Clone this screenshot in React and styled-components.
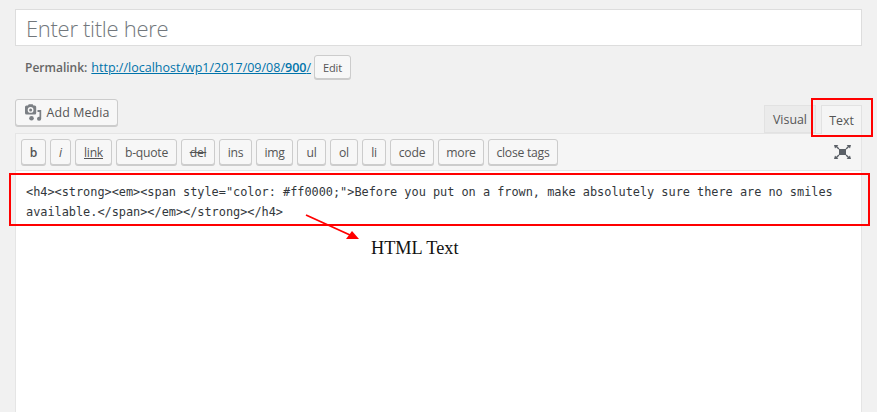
import React from "react";
import styled, { createGlobalStyle } from "styled-components";

const Global = createGlobalStyle`
  html, body { margin: 0; padding: 0; background: #f1f1f1; overflow: hidden; }
  #root { height: 412px; }
  * { box-sizing: border-box; }
`;

const Page = styled.div`
  position: relative;
  width: 877px;
  height: 412px;
  padding: 9px 15px 0;
  overflow: hidden;
  background: #f1f1f1;
  color: #555;
  font-family: "Open Sans", "Liberation Sans", sans-serif;
  font-size: 13px;
`;

const TitleBox = styled.div`
  height: 37px;
  display: flex;
  align-items: center;
  padding: 0 10px;
  background: #fff;
  border: 1px solid #ddd;
  color: #72777c;
  font-size: 22px;
  font-weight: 300;
  letter-spacing: -0.3px;
`;

const PermalinkRow = styled.div`
  height: 26px;
  margin-top: 8px;
  padding-left: 10px;
  display: flex;
  align-items: center;
  gap: 3px;
  font-size: 12.5px;
  color: #666;
`;

const Label = styled.strong`
  font-weight: 600;
  font-size: 12px;
  margin-right: 1px;
`;

const Link = styled.a`
  color: #0073aa;
  text-decoration: underline;
  b { font-weight: 600; }
`;

const Button = styled.span`
  display: inline-flex;
  align-items: center;
  justify-content: center;
  background: #f7f7f7;
  border: 1px solid #ccc;
  border-radius: 3px;
  box-shadow: 0 1px 0 #ccc;
  color: #555;
  white-space: nowrap;
`;

const EditButton = styled(Button)`
  width: 37px;
  height: 24px;
  font-size: 11px;
  letter-spacing: -0.1px;
`;

const MediaRow = styled.div`
  height: 34px;
  margin-top: 19px;
  display: flex;
  justify-content: space-between;
  align-items: flex-start;
`;

const MediaButton = styled(Button)`
  width: 103px;
  height: 27px;
  gap: 5px;
  font-size: 12.4px;
  letter-spacing: 0.1px;
`;

const Tabs = styled.div`
  display: flex;
  align-items: flex-end;
  height: 29px;
  margin-top: 5px;
  gap: 5px;
  position: relative;
  z-index: 1;
`;

const Tab = styled.div`
  height: ${(p) => (p.$active ? 29 : 28)}px;
  margin-bottom: ${(p) => (p.$active ? -1 : 0)}px;
  width: ${(p) => p.$w}px;
  display: flex;
  align-items: center;
  justify-content: center;
  background: ${(p) => (p.$active ? "#f5f5f5" : "#ebebeb")};
  border: 1px solid #e2e2e2;
  border-bottom: ${(p) => (p.$active ? "none" : "1px solid #e2e2e2")};
  color: #555;
  font-size: 12.4px;
`;

const Editor = styled.div`
  border: 1px solid #e5e5e5;
  height: 300px;
  background: #fff;
`;

const Toolbar = styled.div`
  height: 37px;
  padding: 5px 5px 0 5px;
  display: flex;
  align-items: flex-start;
  gap: 4px;
  background: #f5f5f5;
  border-bottom: 1px solid #e5e5e5;
  position: relative;
`;

const ToolButton = styled(Button)`
  height: 26px;
  padding-top: 1px;
  width: ${(p) => p.$w}px;
  font-size: 12.2px;
  letter-spacing: -0.25px;
  font-weight: ${(p) => (p.$bold ? 600 : 400)};
  font-style: ${(p) => (p.$italic ? "italic" : "normal")};
  text-decoration: ${(p) => p.$deco || "none"};
`;

const FullscreenIcon = styled.svg`
  position: absolute;
  right: 10px;
  top: 11px;
`;

const Code = styled.div`
  padding: 12px 10px;
  font-family: "DejaVu Sans Mono", "Liberation Mono", monospace;
  font-size: 11.9px;
  line-height: 19.5px;
  letter-spacing: -0.02px;
  color: #32373c;
  white-space: pre-wrap;
`;

const RedBox = styled.div`
  position: absolute;
  left: ${(p) => p.$x}px;
  top: ${(p) => p.$y}px;
  width: ${(p) => p.$w}px;
  height: ${(p) => p.$h}px;
  border: 2px solid #f00;
  pointer-events: none;
  z-index: 2;
`;

const Arrow = styled.svg`
  position: absolute;
  left: 300px;
  top: 210px;
  z-index: 2;
`;

const Note = styled.div`
  position: absolute;
  left: 371px;
  top: 238px;
  font-family: "Liberation Serif", serif;
  font-size: 18.3px;
  line-height: 21px;
  color: #111;
  z-index: 2;
`;

const tools = [
  ["b", 25, { $bold: true }],
  ["i", 21, { $italic: true }],
  ["link", 37, { $deco: "underline" }],
  ["b-quote", 61],
  ["del", 34, { $deco: "line-through" }],
  ["ins", 33],
  ["img", 37],
  ["ul", 29],
  ["ol", 28],
  ["li", 24],
  ["code", 44],
  ["more", 46],
  ["close tags", 70],
];

export default function App() {
  return (
    <Page>
      <Global />
      <TitleBox>Enter title here</TitleBox>
      <PermalinkRow>
        <Label>Permalink:</Label>
        <Link>
          http://localhost/wp1/2017/09/08/<b>900</b>/
        </Link>
        <EditButton>Edit</EditButton>
      </PermalinkRow>
      <MediaRow>
        <MediaButton>
          <svg width="18" height="17" viewBox="0 0 18 17" fill="#7b7f84">
            <path d="M2.5 1.5h1.5l.7-1.2h4l.7 1.2h1.3A1.5 1.5 0 0 1 12.2 3v6A1.5 1.5 0 0 1 10.7 10.5h-8.2A1.5 1.5 0 0 1 1 9V3a1.5 1.5 0 0 1 1.5-1.5zM6.6 3a2.9 2.9 0 1 0 0 5.8 2.9 2.9 0 0 0 0-5.8z" />
            <circle cx="6.6" cy="5.9" r="1.5" />
            <path d="M13.5 6h3.7v8.7a2.1 2.1 0 1 1-1.7-2V8h-2z" />
            <circle cx="7.5" cy="14.3" r="2.3" />
          </svg>
          Add Media
        </MediaButton>
        <Tabs>
          <Tab $w={52}>Visual</Tab>
          <Tab $w={41} $active>Text</Tab>
        </Tabs>
      </MediaRow>
      <Editor>
        <Toolbar>
          {tools.map(([label, w, props]) => (
            <ToolButton key={label} $w={w} {...props}>
              {label}
            </ToolButton>
          ))}
          <FullscreenIcon width="17" height="14" viewBox="0 0 17 14" fill="#5a5f66">
            <rect x="5" y="4" width="7" height="6" />
            <path d="M0 0h4.4L3.2 1.2 5.4 3.4 4.4 4.4 2.2 2.2 1 3.6zM17 0h-4.4l1.2 1.2-2.2 2.2 1 1 2.2-2.2L16 3.6zM0 14h4.4l-1.2-1.2 2.2-2.2-1-1-2.2 2.2L1 10.4zM17 14h-4.4l1.2-1.2-2.2-2.2 1-1 2.2 2.2 1.2-1.4z" />
          </FullscreenIcon>
        </Toolbar>
        <Code>{`<h4><strong><em><span style="color: #ff0000;">Before you put on a frown, make absolutely sure there are no smiles available.</span></em></strong></h4>`}</Code>
      </Editor>
      <RedBox $x={811} $y={98} $w={62} $h={39} />
      <RedBox $x={9} $y={173} $w={861} $h={53} />
      <Arrow width="70" height="40" viewBox="0 0 70 40">
        <line x1="6" y1="5" x2="50" y2="25" stroke="#f00" strokeWidth="1.8" />
        <polygon points="59,29 46,29 52,21" fill="#f00" />
      </Arrow>
      <Note>HTML Text</Note>
    </Page>
  );
}
